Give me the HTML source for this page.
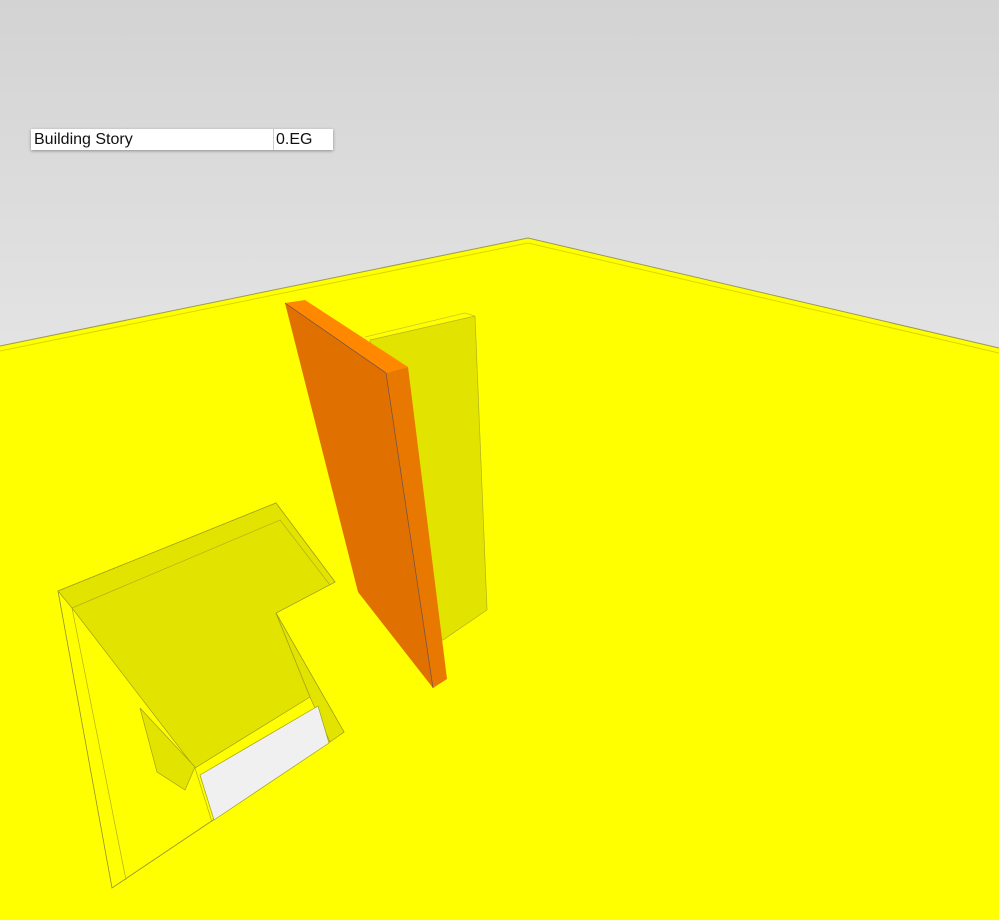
<!DOCTYPE html>
<html><head><meta charset="utf-8"><style>
html,body{margin:0;padding:0;width:999px;height:920px;overflow:hidden;background:#ddd;font-family:"Liberation Sans",sans-serif}
svg{position:absolute;left:0;top:0}
.lbl{position:absolute;left:31px;top:129px;width:302px;height:21px;background:#fff;box-shadow:0 1px 3px rgba(0,0,0,.35);font-size:16px;line-height:21px;color:#111}
.lbl span{position:absolute;top:0}
</style></head><body>
<svg width="999" height="920" viewBox="0 0 999 920">
<defs><linearGradient id="sky" x1="0" y1="0" x2="0" y2="1"><stop offset="0" stop-color="#d3d3d3"/><stop offset="1" stop-color="#e4e4e4"/></linearGradient></defs>
<rect width="999" height="360" fill="url(#sky)"/>
<polygon points="0,346 528,238 999,348 999,920 0,920" fill="#ffff00"/>
<polyline points="0,346 528,238 999,348" fill="none" stroke="#9a9a50" stroke-width="1"/>
<polyline points="0,351 528,243 999,353" fill="none" stroke="#d8d800" stroke-width="1"/>
<polygon points="58,591 276,503 335,582 276,613 344,732 112,888" fill="#ffff00" stroke="#8f8f30" stroke-width="0.8"/>
<polygon points="58,591 276,503 335,582 276,613 310,697 195,768 72,608" fill="#e3e300" stroke="#a0a020" stroke-width="0.7"/>
<polyline points="72,608 280,520 330,585" fill="none" stroke="#b0b020" stroke-width="0.7"/>
<polygon points="276,613 344,732 330,742 310,697" fill="#e3e300" stroke="#a0a020" stroke-width="0.7"/>
<polygon points="140,708 195,767 185,790 157,772" fill="#e3e300" stroke="#a0a020" stroke-width="0.7"/>
<polygon points="200,775 318,706 329,743 214,820" fill="#f0f0f0" stroke="#a0a020" stroke-width="0.7"/>
<line x1="72" y1="608" x2="126" y2="880" stroke="#b0b020" stroke-width="0.7"/>
<line x1="195" y1="768" x2="212" y2="822" stroke="#b0b020" stroke-width="0.7"/>
<polygon points="370,340 475,316 487,610 443,640 400,640" fill="#e3e300" stroke="#b0b020" stroke-width="0.7"/>
<polyline points="365,337 465,313 475,316" fill="none" stroke="#c8c820" stroke-width="0.7"/>
<polygon points="285,303 386,373 433,688 358,592" fill="#e07000"/>
<polygon points="285,303 305,300 408,367 386,373" fill="#ff8800"/>
<polygon points="386,373 408,367 447,679 433,688" fill="#e87800"/>
<polyline points="285,303 386,373 433,688" fill="none" stroke="#6a5050" stroke-width="0.7"/>
</svg>
<div class="lbl"><span style="left:3px">Building Story</span><span style="left:242px;top:0;height:21px;border-left:1px solid #ccc"></span><span style="left:245px">0.EG</span></div>
</body></html>
